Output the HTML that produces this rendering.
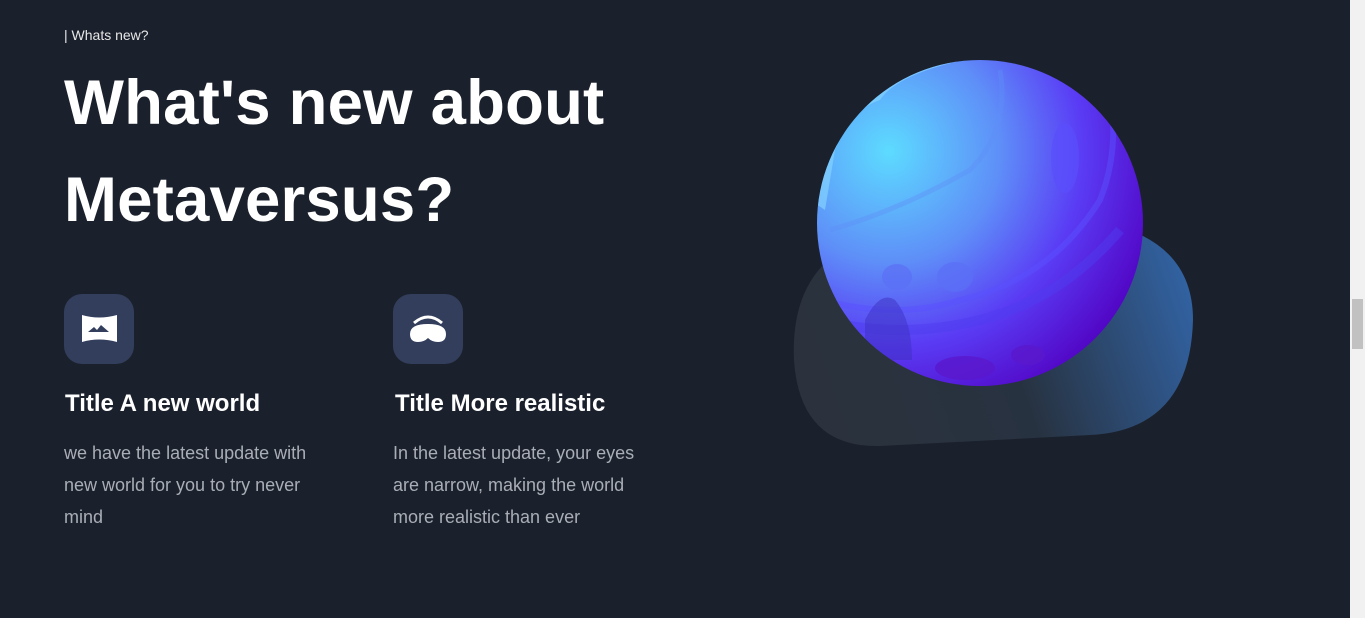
<!DOCTYPE html>
<html><head><style>
html,body{margin:0;padding:0;}
body{width:1365px;height:618px;background:#1b212c;overflow:hidden;position:relative;font-family:"Liberation Sans",Arial,sans-serif;color:#fff;}
.tag{position:absolute;left:64px;top:27px;font-size:14px;color:#e6e6e6;}
h1{position:absolute;left:64px;top:55px;margin:0;font-size:63.5px;line-height:97px;font-weight:bold;letter-spacing:0.2px;}
.ic{position:absolute;top:294px;width:70px;height:70px;border-radius:18px;background:#323e5c;}
.t{position:absolute;top:390px;font-size:24px;font-weight:bold;}
.d{position:absolute;top:437px;font-size:18px;line-height:32px;color:#a9adb5;width:255px;}
.sb{position:absolute;right:0;top:0;width:15px;height:618px;background:#f1f1f1;}
.th{position:absolute;right:2px;top:299px;width:11px;height:50px;background:#c1c1c1;}
</style></head><body>
<div class="tag">| Whats new?</div>
<h1>What's new about<br>Metaversus?</h1>
<div class="ic" style="left:64px"><svg width="70" height="70"><path d="M18 21 Q35 26 53 21 L53 48 Q35 43 18 48 Z" fill="#fff"/><path d="M24 38 L30 33 L33 36 L37 31 L45 38 Z" fill="#323e5c"/></svg></div>
<div class="ic" style="left:393px"><svg width="70" height="70"><path d="M21 29 Q35 17 49 29" stroke="#fff" stroke-width="3" fill="none"/><path d="M17 40 Q17 30 35 30 Q53 30 53 40 Q53 48 45 48 Q39 48 35 44 Q31 48 25 48 Q17 48 17 40Z" fill="#fff"/></svg></div>
<div class="t" style="left:65px">Title A new world</div>
<div class="t" style="left:395px">Title More realistic</div>
<div class="d" style="left:64px">we have the latest update with new world for you to try never mind</div>
<div class="d" style="left:393px">In the latest update, your eyes are narrow, making the world more realistic than ever</div>
<svg style="position:absolute;left:0;top:0" width="1350" height="618">
<defs>
<linearGradient id="bl" x1="0" y1="0.5" x2="1" y2="0.3"><stop offset="0" stop-color="#2b323d"/><stop offset="0.5" stop-color="#273240"/><stop offset="1" stop-color="#3263a4"/></linearGradient>
<radialGradient id="pl" cx="0.22" cy="0.28" r="0.85"><stop offset="0" stop-color="#5ddbff"/><stop offset="0.4" stop-color="#5e8ff8"/><stop offset="0.7" stop-color="#5a3cf5"/><stop offset="1" stop-color="#5207c6"/></radialGradient>
<clipPath id="cp"><ellipse cx="980" cy="223" rx="163" ry="163"/></clipPath>
</defs>
<path d="M880 446 Q800 448 794 360 Q790 270 860 240 Q960 200 1100 222 Q1193 240 1193 320 Q1190 430 1090 435 Z" fill="url(#bl)"/>
<ellipse cx="980" cy="223" rx="163" ry="163" fill="url(#pl)"/>
<g clip-path="url(#cp)">
<path d="M810 200 Q840 60 990 55 Q900 70 880 100 Q850 110 835 150 Q830 180 825 210 Z" fill="#8ad8ff" opacity="0.6"/>
<path d="M820 300 Q900 320 960 300 Q1050 280 1100 200 Q1120 150 1110 90 L1160 150 L1160 400 L820 400 Z" fill="none" stroke="#5a50ff" stroke-width="6" opacity="0.5"/>
<path d="M820 320 Q900 340 980 320 Q1060 300 1120 230" fill="none" stroke="#4d3bf0" stroke-width="10" opacity="0.5"/>
<path d="M830 230 Q900 210 970 170 Q1010 130 1000 70" fill="none" stroke="#5e8ff8" stroke-width="5" opacity="0.4"/>
<ellipse cx="955" cy="277" rx="18" ry="15" fill="#5b6ff5" opacity="0.7"/>
<ellipse cx="897" cy="277" rx="15" ry="13" fill="#5b6ff5" opacity="0.7"/>
<ellipse cx="1065" cy="158" rx="14" ry="35" fill="#5a4ffc" opacity="0.7"/>
<path d="M865 360 L865 320 Q880 290 895 300 Q912 320 912 360 Z" fill="#3b2fc0" opacity="0.5"/>
<ellipse cx="965" cy="368" rx="30" ry="12" fill="#5a18cc" opacity="0.8"/>
<ellipse cx="1028" cy="355" rx="17" ry="10" fill="#5a18cc" opacity="0.8"/>
</g>
</svg>
<div class="sb"><div class="th"></div></div>
</body></html>
